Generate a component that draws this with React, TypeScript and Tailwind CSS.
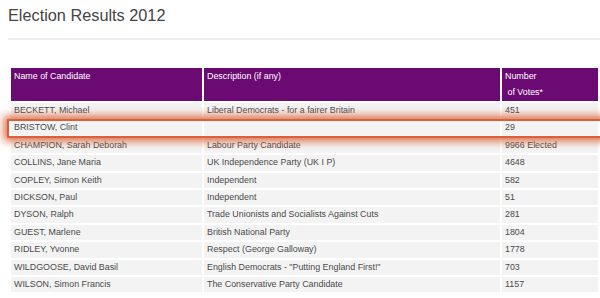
const rows: [string, string, string][] = [
  ["BECKETT, Michael", "Liberal Democrats - for a fairer Britain", "451"],
  ["BRISTOW, Clint", "", "29"],
  ["CHAMPION, Sarah Deborah", "Labour Party Candidate", "9966 Elected"],
  ["COLLINS, Jane Maria", "UK Independence Party (UK I P)", "4648"],
  ["COPLEY, Simon Keith", "Independent", "582"],
  ["DICKSON, Paul", "Independent", "51"],
  ["DYSON, Ralph", "Trade Unionists and Socialists Against Cuts", "281"],
  ["GUEST, Marlene", "British National Party", "1804"],
  ["RIDLEY, Yvonne", "Respect (George Galloway)", "1778"],
  ["WILDGOOSE, David Basil", 'English Democrats - "Putting England First!"', "703"],
  ["WILSON, Simon Francis", "The Conservative Party Candidate", "1157"],
];

const App = () => {
  return (
    <div className="w-[600px] h-[298px] overflow-hidden bg-white font-['Liberation_Sans',Arial,sans-serif]">
      <h1 className="ml-[8px] mt-[7px] text-[16.3px] leading-[16px] text-[#444]">
        Election Results 2012
      </h1>
      <div className="ml-[8px] mt-[15px] h-[2px] bg-[#eeeeee]" />

      <div className="relative mt-[28px] ml-[11px] w-[587px]">
        <div className="flex flex-col gap-[2px] text-[8.9px]">
          <div className="grid grid-cols-[191px_296px_96px] gap-[2px] h-[33px] text-white">
            <div className="bg-[#6a0a72] px-[3px] leading-[16px]">Name of Candidate</div>
            <div className="bg-[#6a0a72] px-[3px] leading-[16px]">Description (if any)</div>
            <div className="bg-[#6a0a72] px-[3px] leading-[16px]">
              Number
              <br />
              &nbsp;of Votes*
            </div>
          </div>
          {rows.map(([name, desc, votes]) => (
            <div
              key={name}
              className="grid grid-cols-[191px_296px_96px] gap-[2px] h-[15.4px] text-[#4a4a4a]"
            >
              <div className="bg-[#f3f3f3] px-[3px] flex items-center">{name}</div>
              <div className="bg-[#f3f3f3] px-[3px] flex items-center">{desc}</div>
              <div className="bg-[#f3f3f3] px-[3px] flex items-center">{votes}</div>
            </div>
          ))}
        </div>

        {/* highlight around BRISTOW row */}
        <div className="absolute left-[-4px] top-[51px] w-[610px] h-[19px] border-2 border-[#d9603b] shadow-[0_0_9px_3px_rgba(220,90,45,0.9)]" />
      </div>
    </div>
  );
};

export default App;
